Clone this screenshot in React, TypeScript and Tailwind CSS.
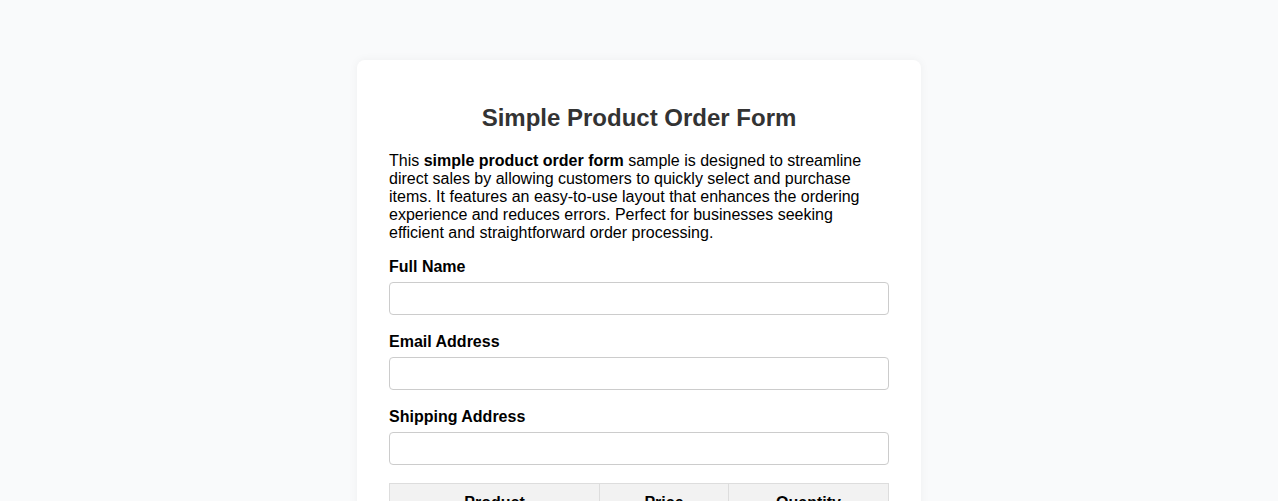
import React from "react";

export default function App() {
  return (
    <div
      className="min-h-screen bg-[#f9fafb] pt-[60px] pb-10"
      style={{ fontFamily: '"Liberation Sans", Arial, sans-serif' }}
    >
      <div className="mx-auto w-[564px] rounded-lg bg-white px-8 pt-[44px] pb-8 shadow-[0_0_10px_rgba(0,0,0,0.05)]">
        <h1 className="mb-[20px] text-center text-[24px] font-bold leading-[28px] text-[#333]">
          Simple Product Order Form
        </h1>
        <p className="text-[16px] leading-[18px] text-black">
          This <strong>simple product order form</strong> sample is designed to streamline direct sales by allowing
          customers to quickly select and purchase items. It features an easy-to-use layout that enhances the ordering
          experience and reduces errors. Perfect for businesses seeking efficient and straightforward order processing.
        </p>
        <form className="mt-[16px]">
          {["Full Name", "Email Address", "Shipping Address"].map((l) => (
            <div key={l} className="mb-[18px]">
              <label className="mb-[6px] block text-[16px] font-bold leading-[18px] text-black">{l}</label>
              <input
                type="text"
                className="block h-[33px] w-full rounded-[4px] border border-[#ccc] bg-white px-2 text-[16px]"
              />
            </div>
          ))}
          <table className="w-full border-collapse text-[16px]">
            <thead>
              <tr className="bg-[#f2f2f2]">
                <th className="w-[210px] border border-[#ddd] px-2 py-[10px] text-center font-bold leading-[18px]">Product</th>
                <th className="w-[129px] border border-[#ddd] px-2 py-[10px] text-center font-bold leading-[18px]">Price</th>
                <th className="border border-[#ddd] px-2 py-[10px] text-center font-bold leading-[18px]">Quantity</th>
              </tr>
            </thead>
            <tbody>
              <tr>
                <td className="border border-[#ddd] px-2 py-[10px]">Widget A</td>
                <td className="border border-[#ddd] px-2 py-[10px] text-center">$10.00</td>
                <td className="border border-[#ddd] px-2 py-[10px] text-center">
                  <input type="number" className="w-[60px] rounded border border-[#ccc]" />
                </td>
              </tr>
            </tbody>
          </table>
        </form>
      </div>
    </div>
  );
}
